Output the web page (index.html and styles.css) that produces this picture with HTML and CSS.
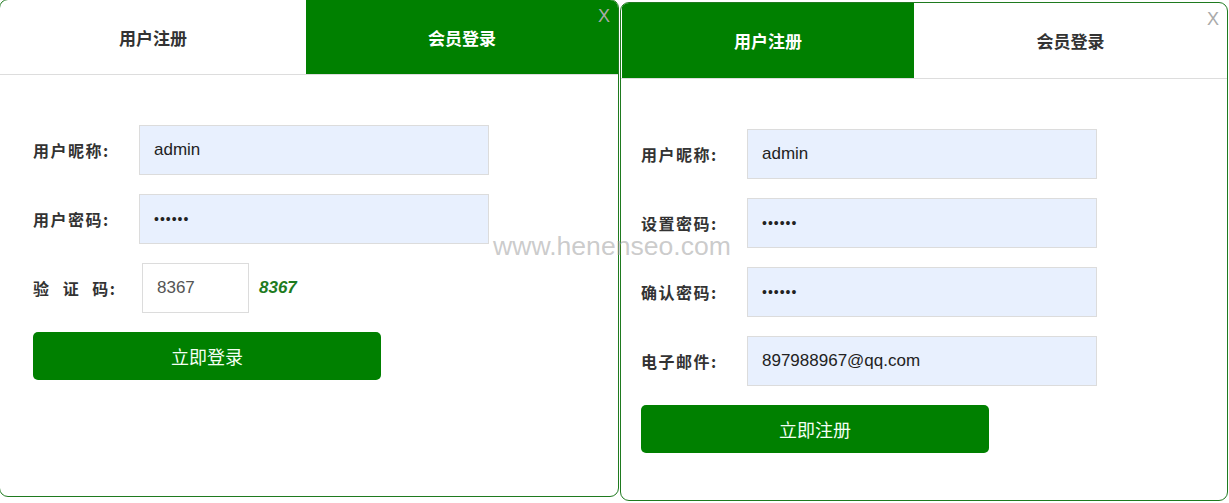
FILE: index.html
```html
<!DOCTYPE html>
<html lang="zh-CN">
<head>
    <meta charset="UTF-8">
    <meta name="viewport" content="width=device-width, initial-scale=1.0">
    <title>用户注册 / 会员登录</title>
    <link rel="stylesheet" href="styles.css">
</head>
<body>
    <div class="page">
        <div class="panel panel-login">
            <span class="close">X</span>
            <div class="tabs">
                <div class="tab">用户注册</div>
                <div class="tab active">会员登录</div>
            </div>
            <form class="form">
                <div class="row">
                    <label>用户昵称:</label>
                    <input class="field" type="text" value="admin">
                </div>
                <div class="row">
                    <label>用户密码:</label>
                    <input class="field" type="password" value="123456">
                </div>
                <div class="row">
                    <label class="spaced">验 证 码:</label>
                    <input class="field code" type="text" value="8367">
                    <span class="code-text">8367</span>
                </div>
                <button type="button" class="submit">立即登录</button>
            </form>
        </div>

        <div class="panel panel-reg">
            <span class="close">X</span>
            <div class="tabs">
                <div class="tab active">用户注册</div>
                <div class="tab">会员登录</div>
            </div>
            <form class="form">
                <div class="row">
                    <label>用户昵称:</label>
                    <input class="field" type="text" value="admin">
                </div>
                <div class="row">
                    <label>设置密码:</label>
                    <input class="field" type="password" value="123456">
                </div>
                <div class="row">
                    <label>确认密码:</label>
                    <input class="field" type="password" value="123456">
                </div>
                <div class="row">
                    <label>电子邮件:</label>
                    <input class="field" type="text" value="897988967@qq.com">
                </div>
                <button type="button" class="submit">立即注册</button>
            </form>
        </div>

        <div class="watermark">www.henenseo.com</div>
    </div>
</body>
</html>
```

FILE: styles.css
```css
* {
    box-sizing: border-box;
}
body {
    margin: 0;
    padding: 0;
    background: #fff;
    font-family: "Liberation Sans", "Noto Sans CJK SC", sans-serif;
    overflow: hidden;
}
.page {
    position: relative;
    display: flex;
    align-items: flex-start;
    gap: 1px;
    width: 1229px;
    height: 503px;
}
.panel {
    position: relative;
    background: #fff;
    border: 1px solid #1f7a1f;
    border-radius: 9px;
    overflow: hidden;
}
.panel-login {
    width: 620px;
    height: 498px;
    margin: -1px 0 0 -1px;
}
.panel-reg {
    width: 608px;
    height: 499px;
    margin-top: 2px;
}
.close {
    position: absolute;
    top: 6px;
    right: 8px;
    color: #aaa;
    font-size: 18px;
    z-index: 2;
}
.tabs {
    display: flex;
    height: 76px;
    border-bottom: 1px solid #ddd;
}
.panel-login .tabs {
    height: 75px;
}
.tab {
    display: flex;
    align-items: center;
    justify-content: center;
    font-family: "Noto Sans CJK SC", sans-serif;
    font-size: 17px;
    font-weight: bold;
    color: #333;
    flex: 1;
}
.tab.active {
    background: #008000;
    color: #fff;
}
.panel-login .tab:first-child {
    flex: 0 0 306px;
}
.panel-reg .tab:first-child {
    flex: 0 0 292px;
    margin-left: 1px;
}
.form {
    padding-top: 50px;
}
.panel-login .form {
    padding-left: 33px;
}
.panel-reg .form {
    padding-top: 50px;
    padding-left: 20px;
}
.row {
    display: flex;
    align-items: center;
    margin-bottom: 19px;
}
.row label {
    width: 106px;
    font-family: "Noto Sans CJK SC", sans-serif;
    font-size: 16px;
    font-weight: bold;
    letter-spacing: 1.5px;
    color: #333;
}
.row label.spaced {
    word-spacing: 7px;
}
.field {
    width: 350px;
    height: 50px;
    padding: 0 14px;
    border: 1px solid #dcdcdc;
    background: #e8f0fe;
    font-family: "Liberation Sans", sans-serif;
    font-size: 17px;
    color: #222;
    outline: none;
}
.field[type="password"] {
    font-size: 14px;
    letter-spacing: 1px;
}
.field.code {
    width: 107px;
    margin-left: 3px;
    background: #fff;
    color: #555;
}
.code-text {
    margin-left: 10px;
    font-size: 17px;
    font-weight: bold;
    font-style: italic;
    color: #1e7b1e;
}
.submit {
    display: block;
    width: 348px;
    height: 48px;
    margin-top: 1px;
    border: none;
    border-radius: 5px;
    background: #008000;
    color: #f4fff4;
    font-family: "Noto Sans CJK SC", sans-serif;
    font-size: 18px;
    cursor: pointer;
}
.watermark {
    position: absolute;
    left: 493px;
    top: 231px;
    font-size: 26.6px;
    color: rgba(160, 160, 160, 0.55);
    pointer-events: none;
}
```
